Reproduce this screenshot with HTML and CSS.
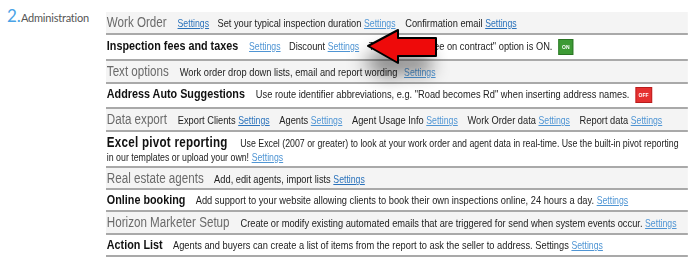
FILE: index.html
```html
<!DOCTYPE html>
<html lang="en">
<head>
    <meta charset="UTF-8">
    <title>Administration</title>
    <link rel="stylesheet" href="styles.css">
</head>
<body>
    <div class="page">
        <div class="side"><span class="num">2.</span><span class="side-title">Administration</span></div>
        <div class="list">
            <div class="row alt">
                <span class="name">Work Order</span> <a class="dk" href="#">Settings</a>
                <span class="item">Set your typical inspection duration <a href="#">Settings</a></span>
                <span class="item">Confirmation email <a class="dk" href="#">Settings</a></span>
            </div>
            <div class="row main fees">
                <span class="name">Inspection fees and taxes</span> <a href="#">Settings</a>
                <span class="item">Discount <a href="#">Settings</a></span>
                <span class="item">The "Show tax fee on contract" option is ON.</span> <span class="badge on">ON</span>
            </div>
            <div class="row alt">
                <span class="name">Text options</span>
                <span class="item">Work order drop down lists, email and report wording</span> <a href="#">Settings</a>
            </div>
            <div class="row main suggest">
                <span class="name">Address Auto Suggestions</span>
                <span class="item">Use route identifier abbreviations, e.g. "Road becomes Rd" when inserting address names.</span> <span class="badge off">OFF</span>
            </div>
            <div class="row alt">
                <span class="name">Data export</span>
                <span class="item">Export Clients <a class="dk" href="#">Settings</a></span>
                <span class="item">Agents <a href="#">Settings</a></span>
                <span class="item">Agent Usage Info <a href="#">Settings</a></span>
                <span class="item">Work Order data <a href="#">Settings</a></span>
                <span class="item">Report data <a href="#">Settings</a></span>
            </div>
            <div class="row main tight">
                <span class="name wide">Excel pivot reporting</span>
                <span class="desc">Use Excel (2007 or greater) to look at your work order and agent data in real-time. Use the built-in pivot reporting in our templates or upload your own!</span> <a href="#">Settings</a>
            </div>
            <div class="row alt tight">
                <span class="name">Real estate agents</span>
                <span class="item">Add, edit agents, import lists <a class="dk" href="#">Settings</a></span>
            </div>
            <div class="row main">
                <span class="name">Online booking</span>
                <span class="item">Add support to your website allowing clients to book their own inspections online, 24 hours a day. <a href="#">Settings</a></span>
            </div>
            <div class="row alt">
                <span class="name">Horizon Marketer Setup</span>
                <span class="item">Create or modify existing automated emails that are triggered for send when system events occur. <a href="#">Settings</a></span>
            </div>
            <div class="row main">
                <span class="name">Action List</span>
                <span class="item">Agents and buyers can create a list of items from the report to ask the seller to address. Settings <a href="#">Settings</a></span>
            </div>
        </div>
        <!-- flecha sobre la fila de tarifas -->
        <svg class="arrow" width="76" height="42" viewBox="0 0 76 42">
            <polygon points="3,19 33,3 33,11 71,11 71,29 33,29 33,36" fill="#ee0a0a" stroke="#000" stroke-width="2" stroke-linejoin="round"/>
        </svg>
    </div>
</body>
</html>
```

FILE: styles.css
```css
/* Panel de administracion */
body {
    margin: 0;
    font-family: "Liberation Sans", Arial, sans-serif;
    color: #222;
    background: #fff;
    overflow: hidden;
}
.page {
    position: relative;
    display: flex;
    align-items: flex-start;
    padding-top: 12px;
}
.side {
    flex: none;
    width: 99px;
    padding-left: 7px;
    margin-top: -6px;
    line-height: 20px;
    font-family: Lato, "DejaVu Sans", sans-serif;
}
.num {
    color: #4aa3e6;
    font-size: 17px;
}
.side-title {
    color: #555;
    font-size: 11px;
    letter-spacing: -0.2px;
}
/* la captura original esta comprimida en horizontal */
.list {
    flex: none;
    width: 701px;
    transform: scaleX(0.83);
    transform-origin: 0 0;
}
.row {
    padding: 3px 1px;
    line-height: 14px;
    font-size: 11.2px;
    border-bottom: 2px solid #a9a9a9;
}
.row.fees {
    padding: 4px 1px;
}
.row.suggest {
    padding: 3px 1px 4px;
}
.row.tight {
    padding: 3px 1px 2px;
}
.row.alt {
    background: #f4f4f4;
}
.name {
    font-size: 14px;
    color: #6a6a6a;
    margin-right: 10px;
}
.row.main .name {
    font-size: 13px;
    font-weight: bold;
    color: #111;
}
.row.main .name.wide {
    font-size: 14px;
    letter-spacing: 0.3px;
    margin-right: 12px;
}
.desc {
    font-size: 10.6px;
}
a + .item {
    margin-left: 7px;
}
.item + .item {
    margin-left: 8.5px;
}
.item + a {
    margin-left: 5px;
}
a {
    color: #4f95d4;
    font-size: 10.5px;
    text-decoration: underline;
}
a.dk {
    color: #2a72bb;
}
.badge {
    display: inline-block;
    height: 14px;
    line-height: 14px;
    vertical-align: middle;
    font-size: 6px;
    font-weight: bold;
    color: #fff;
    text-align: center;
    margin-left: 4px;
}
.badge.on {
    width: 16px;
    background: #3c9a34;
    border: 1px solid #2a7424;
}
.badge.off {
    width: 18px;
    background: #e53030;
    border: 1px solid #b71c1c;
}
.arrow {
    position: absolute;
    left: 365px;
    top: 27px;
    filter: drop-shadow(-6px 16px 9px rgba(0, 0, 0, 0.45));
}
```
